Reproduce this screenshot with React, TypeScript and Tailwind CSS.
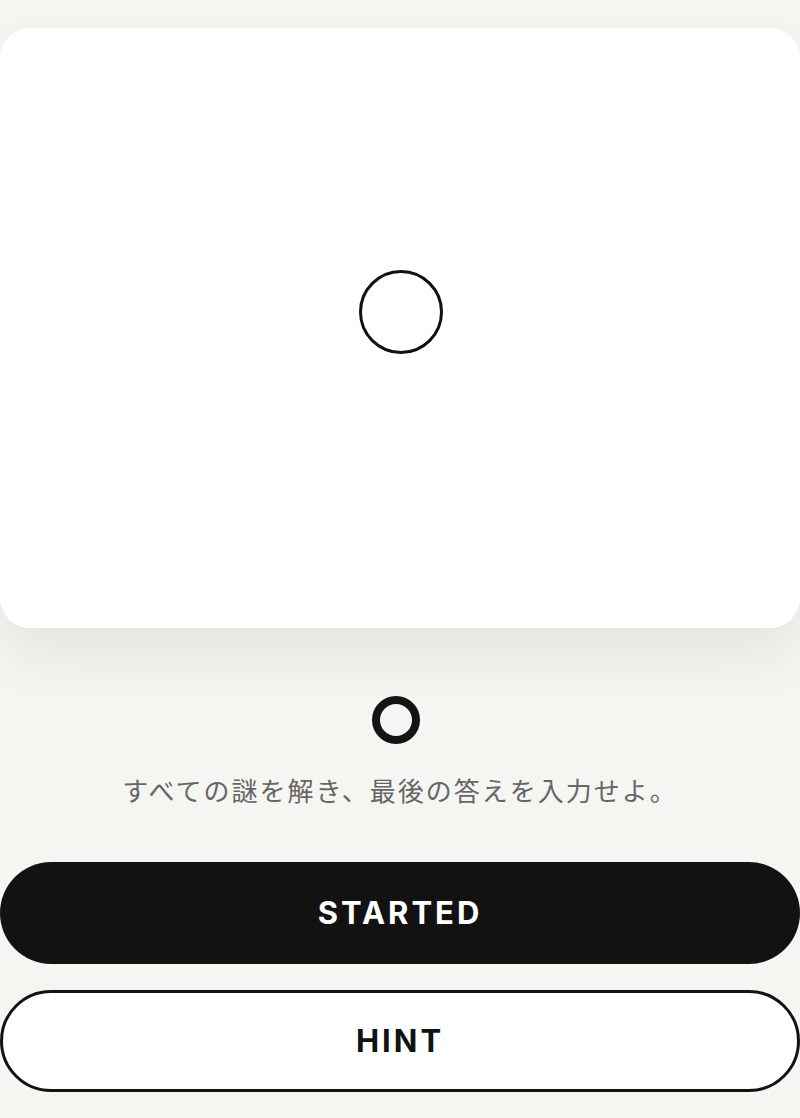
export default function App() {
  return (
    <div
      className="min-h-[1118px] w-full bg-[#f5f5f2] flex flex-col items-stretch"
      style={{ fontFamily: '"Noto Sans CJK JP", "Noto Sans", Inter, sans-serif' }}
    >
      {/* Puzzle card */}
      <div className="mt-[28px] h-[600px] bg-white rounded-[30px] shadow-[0_28px_60px_rgba(0,0,0,0.07)] flex items-center justify-center pb-[32px] pl-[2px]">
        <div className="w-[84px] h-[84px] rounded-full border-[3.5px] border-[#111]" />
      </div>

      {/* Status */}
      <div className="mt-[68px] flex justify-center pr-[8px]">
        <div className="w-[48px] h-[48px] rounded-full border-[8px] border-[#141414]" />
      </div>

      <p className="mt-[28px] text-center text-[26px] leading-[36px] tracking-[2px] text-[#666666]">
        すべての謎を解き、最後の答えを入力せよ。
      </p>

      {/* Actions */}
      <div className="mt-[54px] flex flex-col gap-[26px]">
        <button
          className="h-[102px] w-full rounded-full bg-[#121212] text-white text-[31px] font-bold tracking-[3px]"
          style={{ fontFamily: 'Inter, "Noto Sans", sans-serif' }}
        >
          STARTED
        </button>
        <button
          className="h-[102px] w-full rounded-full bg-white border-[3.5px] border-[#121212] text-[#121212] text-[31px] font-bold tracking-[3px]"
          style={{ fontFamily: 'Inter, "Noto Sans", sans-serif' }}
        >
          HINT
        </button>
      </div>
    </div>
  );
}
